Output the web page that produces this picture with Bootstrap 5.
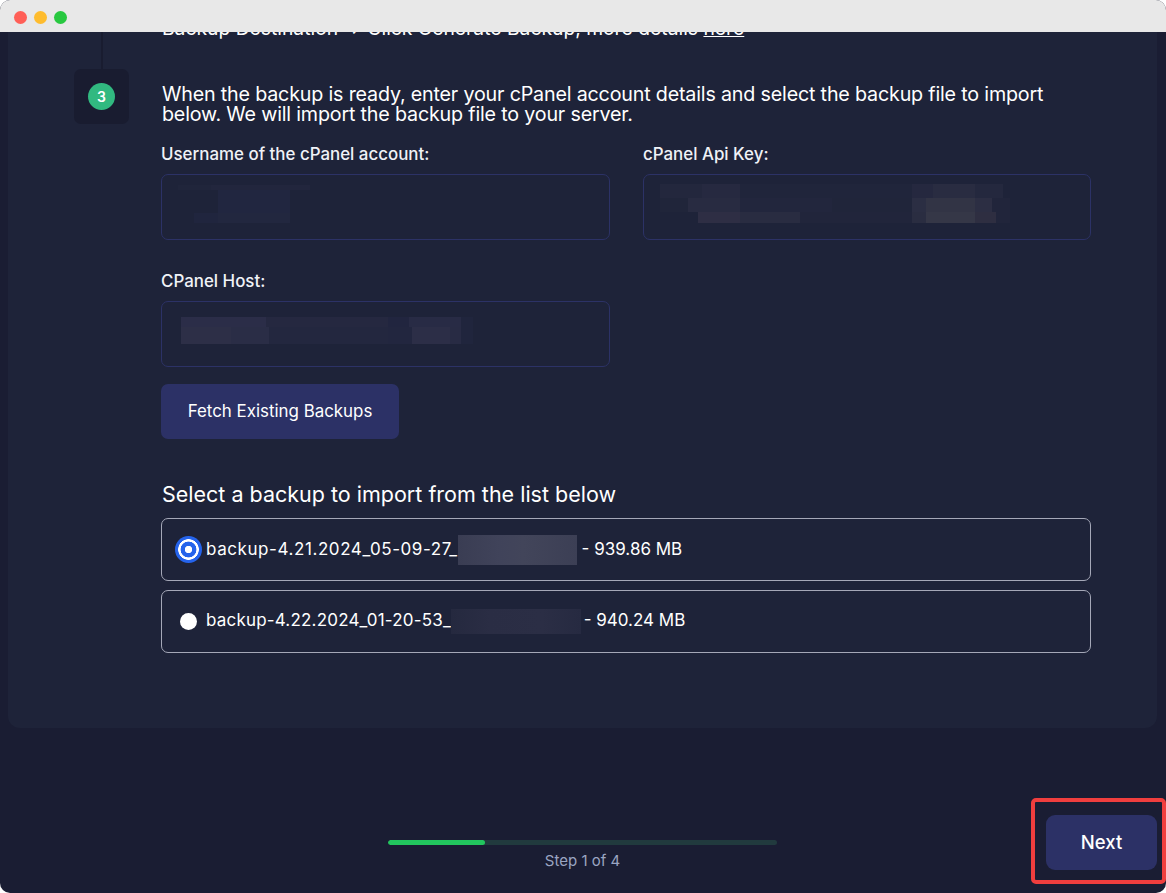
<!doctype html>
<html lang="en">
<head>
<meta charset="utf-8">
<title>Import backup</title>
<link href="https://cdn.jsdelivr.net/npm/bootstrap@5.3.0/dist/css/bootstrap.min.css" rel="stylesheet">
<style>
html,body{height:100%;background:#fff;overflow:hidden}
body{font-family:Inter,"Liberation Sans",sans-serif;color:#fff}
.app-window{height:893px;width:1166px;background:#1a1d33;border-radius:10px;overflow:hidden}
.title-bar{height:32px;background:#e8e8e8;padding-left:14px;gap:7px;flex:none}
.tl{width:13px;height:13px;border-radius:50%;margin-top:2px}
.tl-r{background:#ff5f57}.tl-y{background:#febc2e}.tl-g{background:#28c840}
.scroll-area{height:696px;overflow:hidden;flex:none}
.panel{background:#1e2339;margin:0 9px 0 8px;height:696px;border-radius:0 0 12px 12px;padding-left:66px;padding-right:66px}
.rail{width:55px;flex:none}
.rail-line{width:2px;height:37px;background:#191c30}
.step-box{width:55px;height:55px;background:#191c30;border-radius:7px}
.step-dot{width:27px;height:27px;background:#31b980;font-size:14px;font-weight:600}
.step-body{margin-left:32px;width:930px;flex:none}
.cut-line{font-size:19.3px;line-height:20px;margin:-14px 0 0 1px;height:20px}
.cut-line a{color:#fff}
.intro{font-size:19.7px;line-height:20px;margin:46px 0 0 1px;letter-spacing:-.18px}
.fields{display:grid;grid-template-columns:449px 448px;column-gap:33px;margin-top:20px}
.fld-label{font-size:16.9px;line-height:20px;margin:0 0 10px;display:block;font-weight:500;color:#f0f2f7}
.field{margin-bottom:31px}
.field-last{margin-bottom:17px}
.form-control.fld-input{height:66px;background-color:transparent;border:1px solid #2c3266;border-radius:7px;background-repeat:no-repeat}
.m-user{
  background-image:
    linear-gradient(90deg,#20253b 0 25%,#22263d 25% 100%),
    linear-gradient(90deg,transparent 0 30%,#212640 30% 85%,transparent 85%),
    linear-gradient(90deg,transparent 0 12%,#20253e 12% 30%,#22273f 30% 85%,transparent 85%);
  background-size:132px 5px,132px 23px,132px 10px;
  background-position:16px 10px,16px 15px,16px 38px}
.m-key{
  background-image:
    linear-gradient(90deg,#23273d 0 12%,#262940 12% 23%,#20253b 23% 72%,#25283f 72% 78%,#292c41 78% 90%,#24283e 90% 98%,transparent 98%),
    linear-gradient(90deg,#20253a 0 8%,#282b41 8% 23%,#22263d 23% 49%,#20253a 49% 72%,#2b2e43 72% 76%,#323445 76% 90%,#2c2e43 90% 95%,#21253b 95% 100%),
    linear-gradient(90deg,transparent 0 11%,#2e2e44 11% 23%,#292c41 23% 40%,#21253b 40% 72%,#2a2d41 72% 76%,#353747 76% 90%,#2e2e41 90% 96%,#21253b 96% 100%);
  background-size:350px 14px,350px 14px,350px 11px;
  background-position:16px 9px,16px 23px,16px 37px}
.m-host{
  background-image:
    linear-gradient(90deg,#2b2d48 0 29%,#252840 29% 71%,#21253f 71% 78%,#282b45 78% 96%,#20253d 96% 100%),
    linear-gradient(90deg,#2d2f47 0 17%,#2a2d46 17% 30%,#23273f 30% 71%,#22263f 71% 79%,#2c2e47 79% 92%,#282b44 92% 96%,#20253d 96% 100%);
  background-size:292px 10px,292px 17px;
  background-position:19px 15px,19px 25px}
.btn.fetch-btn{background:#2c3166;color:#fff;border:0;width:238px;height:55px;border-radius:7px;font-size:16.9px;font-weight:400}
.pick-title{font-size:21.5px;font-weight:400;line-height:24px;margin:43px 0 12px 1px}
.pick-row{height:63px;border:1px solid #a5a8b8;border-radius:7px;margin-bottom:9px;padding-left:13px;font-size:17px;min-height:0}
.pick-row .form-check-input{float:none;margin:0;flex:none;background-color:#fff;border:0}
.form-check-input.pick-on{width:27px;height:27px;background-color:#2563eb;background-image:radial-gradient(circle,#fff 0 3.4px,#2563eb 4px 7.6px,#fff 8.2px 10px,#2563eb 10.6px)}
.form-check-input.pick-off{width:17px;height:17px;margin-left:5px !important;margin-right:5px !important}
.pick-text{margin-left:4px;line-height:20px}
.name-a{letter-spacing:.58px}
.name-b{letter-spacing:.19px}
.blur-a{display:inline-block;width:119px;height:30px;background:linear-gradient(90deg,#3a3d53 0,#40435a 35%,#42455a 55%,#3c3f55 100%);vertical-align:middle;margin-right:5px}
.blur-b{display:inline-block;width:130px;height:25px;background:linear-gradient(90deg,#25293f 0,#2a2d44 30%,#2b2e45 70%,#262a41 100%);vertical-align:middle;margin-right:-2px}
.bottom-zone{flex:1;position:relative}
.stepper{position:absolute;left:388px;top:112px;width:389px;text-align:center}
.track{height:5px;background:#213a3e;border-radius:3px;overflow:hidden}
.track-fill{height:5px;width:25%;background:#22c55e;border-radius:3px}
.step-note{font-size:15px;color:#9aa5c2;line-height:18px;margin-top:7px}
.callout{position:absolute;left:1031px;top:70px;width:135px;height:86px;border:4px solid #f03e3e;border-radius:5px}
.btn.next-btn{position:absolute;left:1046px;top:87px;width:111px;height:55px;background:#2c3166;color:#fff;border:0;border-radius:9px;font-size:18.5px;font-weight:500}
</style>
</head>
<body>
<div class="app-window d-flex flex-column">
  <div class="title-bar d-flex align-items-center">
    <span class="tl tl-r"></span><span class="tl tl-y"></span><span class="tl tl-g"></span>
  </div>
  <div class="scroll-area">
    <div class="panel d-flex">
      <div class="rail d-flex flex-column align-items-center">
        <div class="rail-line"></div>
        <div class="step-box d-flex align-items-center justify-content-center">
          <div class="step-dot rounded-circle d-flex align-items-center justify-content-center">3</div>
        </div>
      </div>
      <div class="step-body">
        <p class="cut-line">Backup Destination → Click Generate Backup, more details <a href="#">here</a></p>
        <p class="intro">When the backup is ready, enter your cPanel account details and select the backup file to import below. We will import the backup file to your server.</p>
        <div class="fields">
          <div class="field"><label class="fld-label" for="u">Username of the cPanel account:</label><input id="u" class="form-control fld-input m-user"></div>
          <div class="field"><label class="fld-label" for="k">cPanel Api Key:</label><input id="k" class="form-control fld-input m-key"></div>
          <div class="field-last"><label class="fld-label" for="h">CPanel Host:</label><input id="h" class="form-control fld-input m-host"></div>
        </div>
        <button class="btn fetch-btn" type="button">Fetch Existing Backups</button>
        <h2 class="pick-title">Select a backup to import from the list below</h2>
        <div class="form-check pick-row d-flex align-items-center">
          <input class="form-check-input pick-on" type="radio" name="b" checked>
          <span class="pick-text"><span class="name-a">backup-4.21.2024_05-09-27_</span><span class="blur-a"></span>- 939.86 MB</span>
        </div>
        <div class="form-check pick-row d-flex align-items-center">
          <input class="form-check-input pick-off" type="radio" name="b">
          <span class="pick-text"><span class="name-b">backup-4.22.2024_01-20-53_</span><span class="blur-b"></span> - 940.24 MB</span>
        </div>
      </div>
    </div>
  </div>
  <div class="bottom-zone">
    <div class="stepper">
      <div class="track"><div class="track-fill"></div></div>
      <div class="step-note">Step 1 of 4</div>
    </div>
    <div class="callout"></div>
    <button class="btn next-btn" type="button">Next</button>
  </div>
</div>
<script src="https://cdn.jsdelivr.net/npm/bootstrap@5.3.0/dist/js/bootstrap.bundle.min.js"></script>
</body>
</html>
